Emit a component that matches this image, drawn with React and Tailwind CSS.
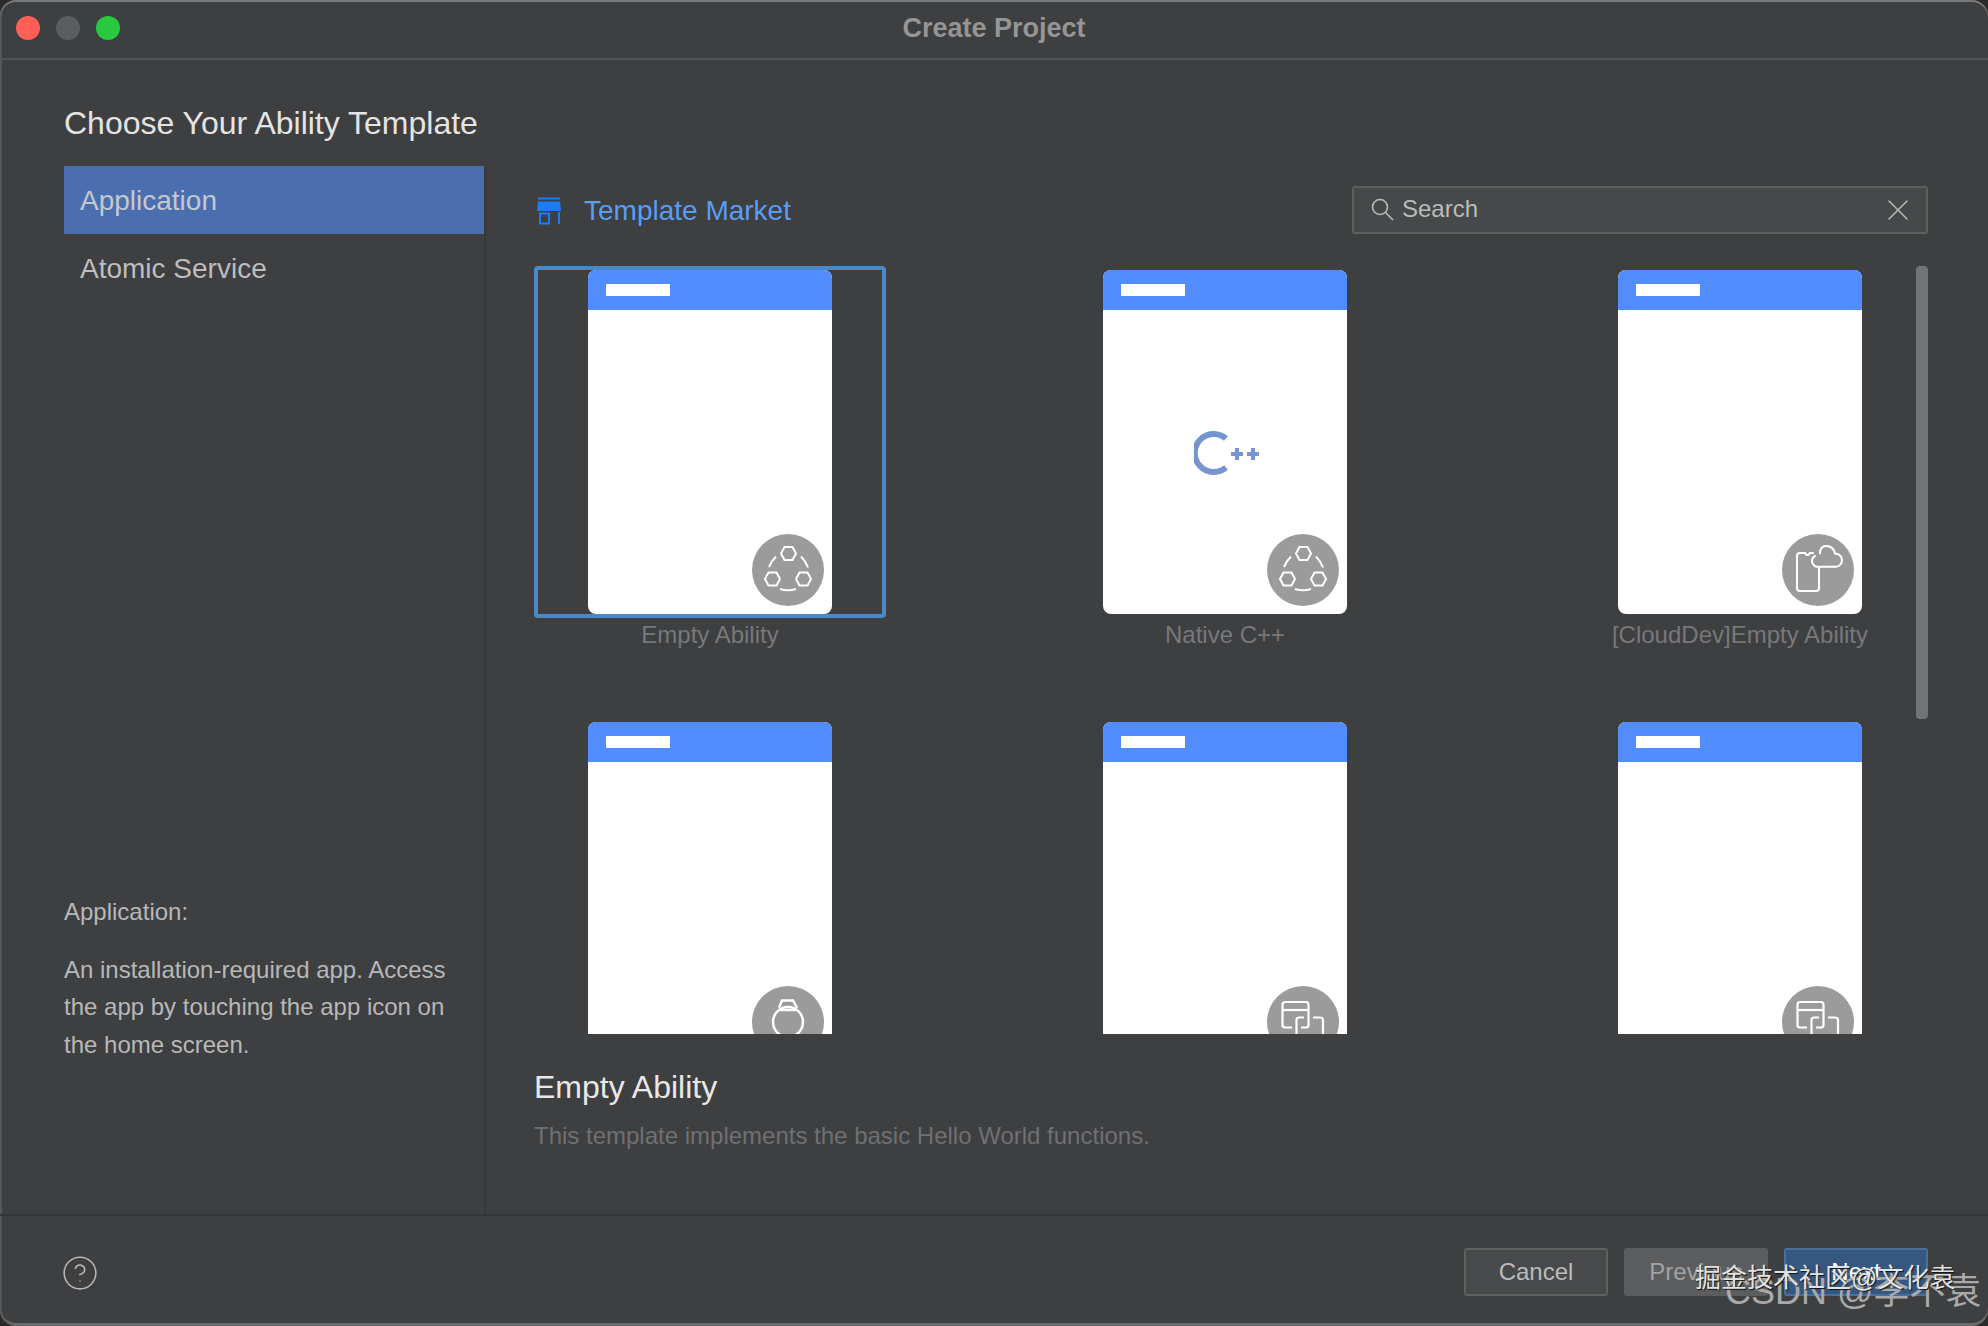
import React from "react";
import { X, CircleHelp } from "lucide-react";

const HexIcon = () => (
  <svg viewBox="0 0 72 72" className="w-full h-full" fill="none" stroke="white" strokeWidth="2">
    <path d="M29 19.5 L32.5 13 H40.5 L44 19.5 L40.5 26 H32.5 Z" />
    <path d="M13 45 L16.5 38.5 H24.5 L28 45 L24.5 51.5 H16.5 Z" />
    <path d="M44 45 L47.5 38.5 H55.5 L59 45 L55.5 51.5 H47.5 Z" />
    <path d="M17 33 Q19.5 27 24 22.5" />
    <path d="M49 22.5 Q53.5 27 56 33.5" />
    <path d="M28 55 Q36 57.5 44 55" />
  </svg>
);

const CloudIcon = () => (
  <svg viewBox="0 0 72 72" className="w-full h-full" fill="none" stroke="white" strokeWidth="2" strokeLinecap="round">
    <path d="M31 19 H28 Q27 21 25.5 21 Q24 21 23 19 H18 Q15 19 15 22 V54 Q15 57 18 57 H34 Q37 57 37 54 V34" />
    <path d="M38 19.5 C38 14 41 12 44 12 C49 12 52 15 53 19.5 C57 19.5 60 22.5 60 26 C60 30 57 32.7 54 32.7 H35 C32 32.7 30 29 30 27 C30 24.5 31 23 33 22" />
  </svg>
);

const WatchIcon = () => (
  <svg viewBox="0 0 72 72" className="w-full h-full" fill="none" stroke="white" strokeWidth="2.5">
    <circle cx="36" cy="36" r="15" />
    <path d="M27 22 L30 14.5 H41 L45 22" />
    <path d="M27 24 H45" />
  </svg>
);

const DevicesIcon = () => (
  <svg viewBox="0 0 72 72" className="w-full h-full" fill="none" stroke="white" strokeWidth="2.2">
    <path d="M25 41.5 H18 Q15.5 41.5 15.5 39 V19 Q15.5 16 18 16 H39 Q41.5 16 41.5 19 V39 Q41.5 41.5 39 41.5 H34" />
    <path d="M15.5 24 H41.5" />
    <path d="M29.5 50 V34 Q29.5 31.5 32 31.5 H37" />
    <path d="M46 31.5 H53 Q56 31.5 56 34 V50" />
  </svg>
);

const CppIcon = () => (
  <svg viewBox="0 0 66 44" className="w-[66px] h-[44px] mb-[18px] ml-1" fill="none" stroke="#7694d0">
    <path d="M32 7.5 A19 19 0 1 0 32 36.5" strokeWidth="6" />
    <path d="M37 23 H49 M43 17 V29 M53 23 H65 M59 17 V29" strokeWidth="4" />
  </svg>
);

const templates = [
  { name: "Empty Ability", badge: <HexIcon />, selected: true },
  { name: "Native C++", badge: <HexIcon />, center: <CppIcon /> },
  { name: "[CloudDev]Empty Ability", badge: <CloudIcon /> },
  { name: "", badge: <WatchIcon /> },
  { name: "", badge: <DevicesIcon /> },
  { name: "", badge: <DevicesIcon /> },
];

const TemplateCard = ({ name, badge, center, selected }) => (
  <div className="h-[452px] flex flex-col">
    <div
      className={`h-[352px] rounded-[4px] border-4 px-[50px] ${
        selected ? "border-[#4a88c7]" : "border-transparent"
      }`}
    >
      <div className="relative h-[344px] rounded-lg overflow-hidden bg-white flex flex-col">
        <div className="h-10 bg-[#528dff] flex items-center pl-[18px]">
          <div className="w-16 h-3 bg-white"></div>
        </div>
        <div className="flex-1 flex items-center justify-center">{center}</div>
        <div className="absolute right-2 bottom-2 w-[72px] h-[72px] rounded-full bg-[#9b9b9b]">{badge}</div>
      </div>
    </div>
    <div className="h-[34px] flex items-center justify-center text-2xl text-[#77787a] whitespace-nowrap">{name}</div>
  </div>
);

const App = () => {
  return (
    <div className="relative w-[1988px] h-[1326px] overflow-hidden bg-[#2b2b2b] [font-family:'Liberation_Sans','Noto_Sans_CJK_SC',sans-serif]">
      <div className="w-full h-full rounded-[16px] overflow-hidden bg-[#3e3f41] shadow-[inset_0_2px_0_#77797a,inset_2px_0_0_#575859,inset_0_-3px_0_#6a6b6c] flex flex-col">
        {/* title bar */}
        <div className="h-[60px] shrink-0 border-b-2 border-[#505253] grid grid-cols-[1fr_auto_1fr] items-center px-4 pb-[2px]">
          <div className="flex gap-4">
            <div className="w-6 h-6 rounded-full bg-[#ff5f57]"></div>
            <div className="w-6 h-6 rounded-full bg-[#5b5e60]"></div>
            <div className="w-6 h-6 rounded-full bg-[#28c840]"></div>
          </div>
          <div className="text-[27px] font-bold text-[#959595]">Create Project</div>
          <div></div>
        </div>

        <div className="h-[106px] shrink-0 flex items-center pl-16 pt-[19px] text-[32px] text-[#e4e4e4] whitespace-nowrap">
          Choose Your Ability Template
        </div>

        <div className="flex-1 flex min-h-0 border-b-2 border-[#343537]">
          {/* left column */}
          <div className="w-[486px] shrink-0 border-r-2 border-[#37383a] pl-16 flex flex-col">
            <div className="h-[68px] bg-[#4b6eaf] pl-4 pt-px flex items-center text-[28px] text-[#c4c8cf]">Application</div>
            <div className="h-[68px] pl-4 pt-px flex items-center text-[28px] text-[#bdbdbd]">Atomic Service</div>
            <div className="mt-auto pb-[151px] pr-9 text-2xl leading-[37.5px] text-[#b8b8b8]">
              <p className="mb-5">Application:</p>
              <p>An installation-required app. Access the app by touching the app icon on the home screen.</p>
            </div>
          </div>

          {/* right column */}
          <div className="flex-1 min-w-0 pl-12 pr-[60px] flex flex-col">
            <div className="h-[100px] shrink-0 flex items-start justify-between pt-5">
              <div className="flex items-center gap-5 h-[47px] mt-px">
                <svg viewBox="0 0 30 28" className="w-[30px] h-7" fill="#1a7df5">
                  <rect x="4" y="0.5" width="22" height="2" />
                  <path d="M4 4.5 H26 L27 14 H3 Z" />
                  <rect x="6" y="16.5" width="9" height="10" fill="none" stroke="#1a7df5" strokeWidth="2" />
                  <rect x="24" y="15" width="2" height="12" />
                </svg>
                <span className="text-[28px] text-[#589df6]">Template Market</span>
              </div>
              <div className="w-[576px] h-12 rounded-[3px] border-2 border-[#5e6060] bg-[#45494a] flex items-center pl-[16px] pr-[10px] text-[#bbbbbb]">
                <svg viewBox="0 0 26 26" className="w-[26px] h-[26px] shrink-0" fill="none" stroke="currentColor" strokeWidth="1.6">
                  <circle cx="10" cy="10" r="7.5" />
                  <path d="M15.5 15.5 L23 23" />
                </svg>
                <span className="ml-[6px] text-2xl leading-none flex-1 -mt-0.5">Search</span>
                <X size={36} strokeWidth={1} className="shrink-0" />
              </div>
            </div>

            <div className="relative h-[768px] shrink-0 overflow-hidden">
              <div className="grid grid-cols-[352px_352px_352px] gap-x-[163px]">
                {templates.map((t, i) => (
                  <TemplateCard key={i} {...t} />
                ))}
              </div>
              <div className="absolute right-0 top-0 w-3 h-[453px] rounded-[4px] bg-[#6e7477]"></div>
            </div>

            <div className="pt-[34px]">
              <h2 className="text-[32px] leading-[38px] text-[#e8e8e8]">Empty Ability</h2>
              <p className="mt-[15px] text-2xl leading-[30px] text-[#6f7072]">
                This template implements the basic Hello World functions.
              </p>
            </div>
          </div>
        </div>

        {/* footer */}
        <div className="h-[110px] shrink-0 flex items-center justify-between pl-[61px] pr-[60px] pt-px">
          <CircleHelp size={38} strokeWidth={1} className="text-[#b5b5b5] mt-[3px]" />
          <div className="flex gap-4">
            <button className="w-36 h-12 rounded-[3px] border-2 border-[#5e6060] bg-[#47494b] text-2xl text-[#bbbbbb]">Cancel</button>
            <button className="w-36 h-12 rounded-[3px] bg-[#5c5d5f] text-2xl text-[#a2a2a2]">Previous</button>
            <button className="w-36 h-12 rounded-[3px] border-2 border-[#4a6f9c] bg-[#365880] text-2xl text-white">Next</button>
          </div>
        </div>
      </div>

      {/* watermarks */}
      <div className="absolute left-[1725px] top-[1270px] text-[36px] leading-[44px] text-[#a9a9a9] whitespace-nowrap">CSDN @李不袁</div>
      <div className="absolute left-[1695px] top-[1263px] text-[26px] leading-[30px] text-[#e2e2e2] whitespace-nowrap [text-shadow:1px_1px_1px_#111]">掘金技术社区@文化袁</div>
    </div>
  );
};

export default App;
